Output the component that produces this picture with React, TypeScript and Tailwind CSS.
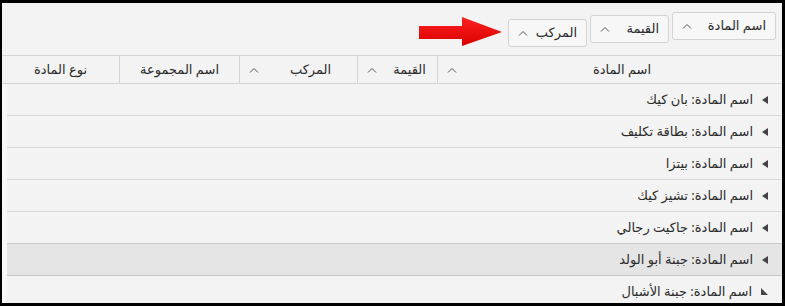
import React from "react";

const font = { fontFamily: '"Noto Sans", "DejaVu Sans", sans-serif' };

function Chevron() {
  return (
    <svg width="10" height="6" viewBox="0 0 10 6" className="shrink-0">
      <polyline points="1,5.5 5,1.5 9,5.5" fill="none" stroke="#555" strokeWidth="1" />
    </svg>
  );
}

const chips = [
  { label: "اسم المادة", w: "w-[104px]", mt: "mt-0" },
  { label: "القيمة", w: "w-[79px]", mt: "mt-[3px]" },
  { label: "المركب", w: "w-[79px]", mt: "mt-[7px]" },
];

const columns = [
  { label: "اسم المادة", w: "w-[344px]", sort: true },
  { label: "القيمة", w: "w-[80px]", sort: true },
  { label: "المركب", w: "w-[118px]", sort: true },
  { label: "اسم المجموعة", w: "w-[120px]", sort: false },
  { label: "نوع المادة", w: "flex-1", sort: false },
];

const rows = [
  "بان كيك",
  "بطاقة تكليف",
  "بيتزا",
  "تشيز كيك",
  "جاكيت رجالي",
  "جبنة أبو الولد",
  "جبنة الأشبال",
];

export default function App() {
  return (
    <div
      dir="rtl"
      style={font}
      className="w-[785px] h-[306px] overflow-hidden border-t-[3px] border-l-[2px] border-r-[3px] border-b-[3px] border-black bg-[#f3f3f3] text-[13px] text-[#2b2b2b]"
    >
      {/* Group panel */}
      <div className="relative h-[52px] flex items-start gap-[3px] pt-[9px] pr-[6px]">
        {chips.map((c) => (
          <div
            key={c.label}
            className={`${c.w} ${c.mt} h-[28px] flex items-center justify-between px-[9px] rounded-[3px] border border-[#d2d2d2] bg-[#f7f7f7]`}
          >
            <span>{c.label}</span>
            <Chevron />
          </div>
        ))}
        {/* annotation arrow */}
        <svg className="absolute left-[416px] top-[12px]" width="86" height="32" viewBox="0 0 86 32">
          <defs>
            <linearGradient id="ar" x1="0" y1="0" x2="0" y2="1">
              <stop offset="0" stopColor="#ff2020" />
              <stop offset="1" stopColor="#d80000" />
            </linearGradient>
          </defs>
          <polygon points="1,11 44,11 44,2 84,17 44,31 44,24 1,24" fill="url(#ar)" />
        </svg>
      </div>

      {/* Column headers */}
      <div className="flex h-[29px] border-t border-b border-[#d4d4d4]">
        {columns.map((c, i) => (
          <div
            key={c.label}
            className={`${c.w} relative flex items-center justify-center ${i > 0 ? "border-r border-[#d4d4d4]" : ""} ${c.sort ? "pl-[24px]" : ""}`}
          >
            <span>{c.label}</span>
            {c.sort && (
              <span className="absolute left-[9px] top-[11px]">
                <Chevron />
              </span>
            )}
          </div>
        ))}
      </div>

      {/* Rows */}
      <div className="border-l-[5px] border-[#f8f8f8]">
        {rows.map((r, i) => {
          const hl = i === 5;
          const last = i === rows.length - 1;
          return (
            <div
              key={r}
              className={`h-[32px] flex items-center gap-[9px] pr-[14px] border-b ${hl || i === 4 ? "border-[#c9c9c9]" : "border-[#d8d8d8]"} ${hl ? "bg-[#e5e5e5]" : ""}`}
            >
              {last ? (
                <svg width="7" height="7" viewBox="0 0 7 7">
                  <polygon points="0,0 0,7 7,7" fill="#444" />
                </svg>
              ) : (
                <svg width="6" height="8" viewBox="0 0 6 8">
                  <polygon points="6,0 6,8 0,4" fill="#444" />
                </svg>
              )}
              <span>اسم المادة: {r}</span>
            </div>
          );
        })}
      </div>
    </div>
  );
}
